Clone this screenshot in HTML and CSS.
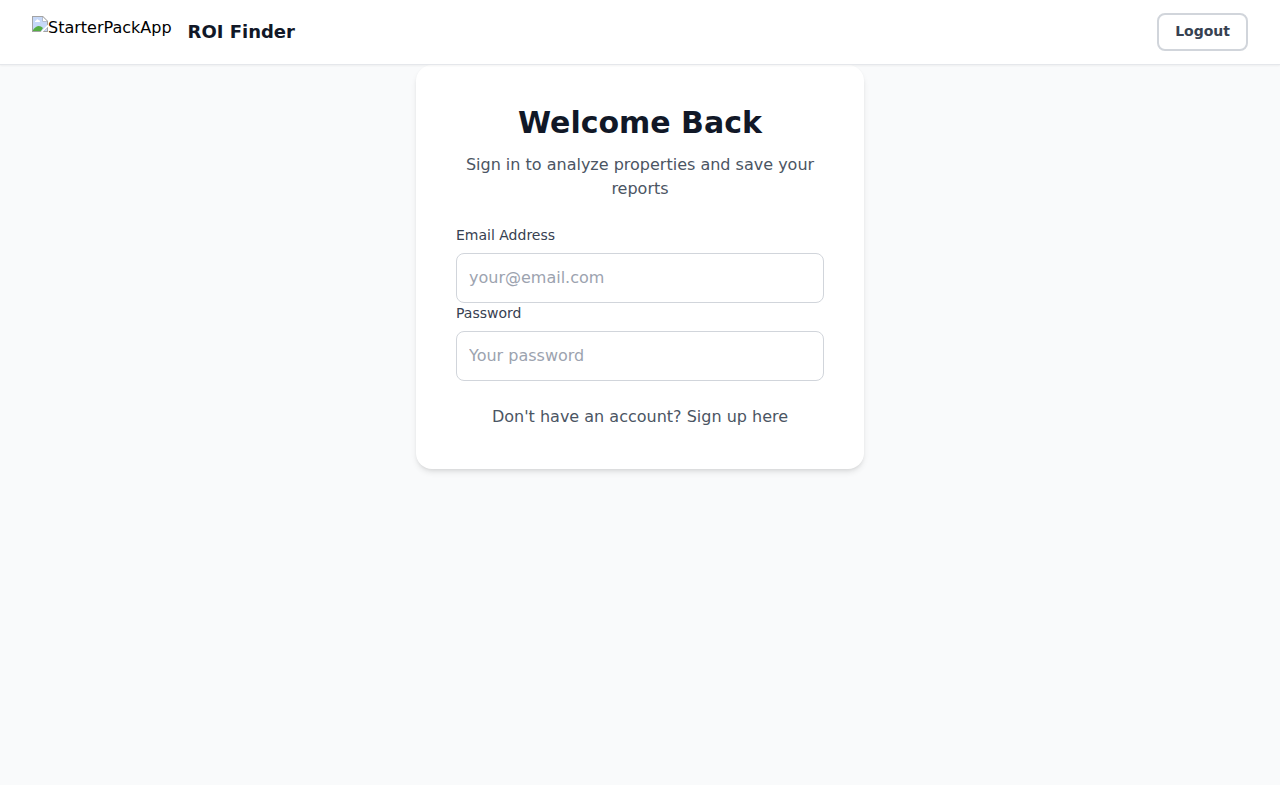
FILE: index.html
```html
<!DOCTYPE html>
<html lang="en">
<head>
<meta charset="utf-8">
<title>ROI Finder</title>
<link rel="stylesheet" href="styles.css">
</head>
<body>
<header class="header">
  <div class="brand">
    <div class="logo">
      <svg class="logo-icon" width="16" height="16" viewBox="0 0 16 16" aria-hidden="true">
        <path d="M0 0H11L16 5V16H0Z" fill="#a3a3a3"/>
        <path d="M1 1H10.500V5.500H15V15H1Z" fill="#c6d8f8"/>
        <path d="M11 1.200V5H14.800Z" fill="#fff"/>
        <path d="M3 6Q2.800 4.500 4.200 4.500Q5 2.500 6.500 4Q8.200 4 8 6Z" fill="#fff"/>
        <path d="M1 15V14Q6 7 11 12L9 15Z" fill="#55ae43"/>
        <path d="M8.500 16L16 8.500V11L11 16Z" fill="#fff"/>
        <path d="M11 16L16 11V16Z" fill="#a3a3a3"/>
        <path d="M12.200 15L15 12.200V15Z" fill="#c6d8f8"/>
      </svg><span>StarterPackApp</span>
    </div>
    <span class="brand-name">ROI Finder</span>
  </div>
  <button class="logout">Logout</button>
</header>
<main class="card">
  <h1 class="title">Welcome Back</h1>
  <p class="subtitle">Sign in to analyze properties and save your reports</p>
  <form>
    <label class="label" for="email">Email Address</label>
    <input class="input" id="email" type="email" placeholder="your@email.com">
    <label class="label" for="password">Password</label>
    <input class="input" id="password" type="password" placeholder="Your password">
  </form>
  <p class="signup">Don't have an account? Sign up here</p>
</main>
</body>
</html>
```
FILE: styles.css
```css
* { box-sizing: border-box; }
body {
  margin: 0;
  min-height: 100vh;
  background: #f9fafb;
  color: #000;
  font: 16px/24px "DejaVu Sans", sans-serif;
}
.header {
  position: sticky;
  top: 0;
  z-index: 10;
  display: flex;
  align-items: center;
  justify-content: space-between;
  height: 65px;
  padding: 0 32px;
  background: #fff;
  border-bottom: 1px solid #e5e7eb;
  box-shadow: 0 1px 2px rgba(0, 0, 0, .05);
}
.brand { display: flex; align-items: center; gap: 16px; }
.logo { display: flex; height: 32px; }
.logo-icon { display: block; }
.brand-name { font-size: 18px; line-height: 28px; font-weight: 700; color: #111827; }
.logout {
  height: 38px;
  padding: 0 16px 2px;
  border: 2px solid #d1d5db;
  border-radius: 8px;
  background: #fff;
  color: #374151;
  font: 600 14px/20px "DejaVu Sans", sans-serif;
}
.card {
  width: 448px;
  margin: 0 auto;
  padding: 40px;
  background: #fff;
  border-radius: 16px;
  box-shadow: 0 4px 6px -1px rgba(0, 0, 0, .1), 0 2px 4px -2px rgba(0, 0, 0, .1);
}
.title { margin: 0 0 12px; font-size: 30px; line-height: 36px; font-weight: 700; text-align: center; color: #111827; }
.subtitle { margin: 0 0 24px; text-align: center; color: #4b5563; }
.label { display: block; margin-bottom: 8px; font-size: 14px; line-height: 20px; color: #374151; }
.input {
  display: block;
  width: 100%;
  height: 50px;
  padding: 11px 12px 13px;
  border: 1px solid #d1d5db;
  border-radius: 8px;
  background: #fff;
  font: 16px/24px "DejaVu Sans", sans-serif;
}
.input::placeholder { color: #9ca3af; }
.signup { margin: 24px 0 0; text-align: center; color: #4b5563; }
```
